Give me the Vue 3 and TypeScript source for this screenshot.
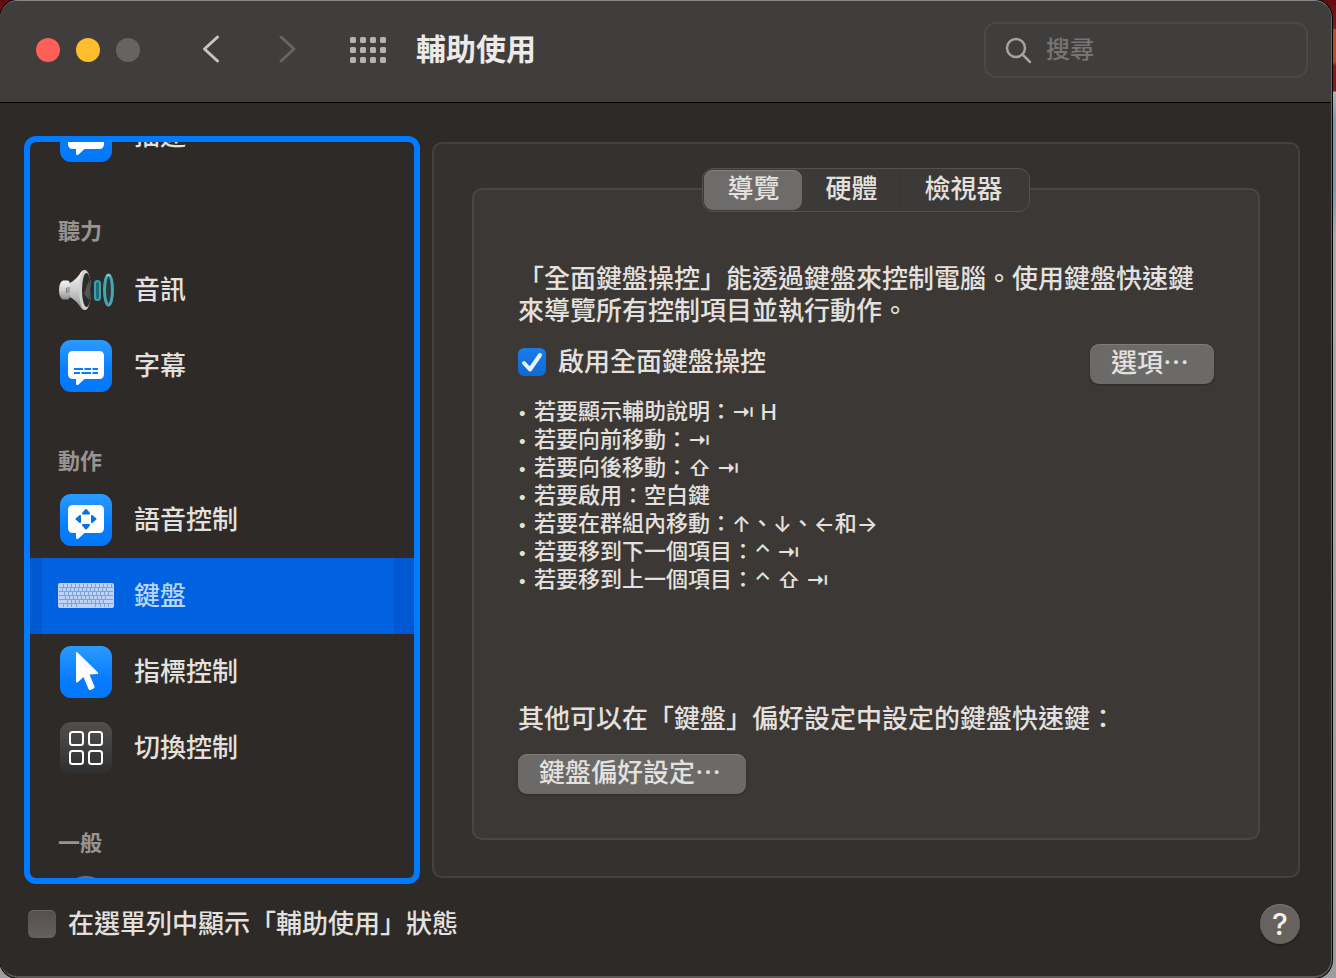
<script setup lang="ts">
import { onMounted, ref } from 'vue'

type IconName = 'bubble' | 'caption' | 'audio' | 'voice' | 'keyboard' | 'pointer' | 'switch' | 'round'

interface Item {
  icon: IconName
  label: string
}

interface Section {
  title: string
  items: Item[]
}

const sections: Section[] = [
  { title: '', items: [{ icon: 'bubble', label: '描述' }] },
  {
    title: '聽力',
    items: [
      { icon: 'audio', label: '音訊' },
      { icon: 'caption', label: '字幕' },
    ],
  },
  {
    title: '動作',
    items: [
      { icon: 'voice', label: '語音控制' },
      { icon: 'keyboard', label: '鍵盤' },
      { icon: 'pointer', label: '指標控制' },
      { icon: 'switch', label: '切換控制' },
    ],
  },
  { title: '一般', items: [{ icon: 'round', label: '' }] },
]

const blueTiles: IconName[] = ['bubble', 'caption', 'voice', 'pointer']
const bubbles: IconName[] = ['bubble', 'caption', 'voice']

const tabs: string[] = ['導覽', '硬體', '檢視器']

interface Part {
  text: string
  key?: boolean
}

const shortcuts: Part[][] = [
  [{ text: '若要顯示輔助說明：' }, { text: '⇥ H', key: true }],
  [{ text: '若要向前移動：' }, { text: '⇥', key: true }],
  [{ text: '若要向後移動：' }, { text: '⇧ ⇥', key: true }],
  [{ text: '若要啟用：空白鍵' }],
  [
    { text: '若要在群組內移動：' },
    { text: '↑', key: true },
    { text: '、' },
    { text: '↓', key: true },
    { text: '、' },
    { text: '←', key: true },
    { text: '和' },
    { text: '→', key: true },
  ],
  [{ text: '若要移到下一個項目：' }, { text: '⌃ ⇥', key: true }],
  [{ text: '若要移到上一個項目：' }, { text: '⌃ ⇧ ⇥', key: true }],
]

const selected = ref('鍵盤')
const activeTab = ref('導覽')
const fullKeyboard = ref(true)
const showStatus = ref(false)
const query = ref('')
const list = ref<HTMLElement | null>(null)

onMounted(() => {
  if (list.value) list.value.scrollTop = 44
})
</script>

<template>
  <div class="desktop" lang="zh-Hant">
    <div class="window">
      <header class="toolbar">
        <div class="lights">
          <button class="light close" type="button" aria-label="關閉"></button>
          <button class="light minimize" type="button" aria-label="縮到最小"></button>
          <button class="light zoom" type="button" aria-label="縮放" disabled></button>
        </div>
        <button class="nav back" type="button" aria-label="返回">
          <svg width="20" height="30" viewBox="0 0 20 30"><path d="M17.500 2 L4.500 14 L17.500 26" /></svg>
        </button>
        <button class="nav forward" type="button" aria-label="前進" disabled>
          <svg width="20" height="30" viewBox="0 0 20 30"><path d="M4 2 L17 14 L4 26" /></svg>
        </button>
        <button class="nav grid" type="button" aria-label="顯示全部">
          <svg width="36" height="26" viewBox="0 0 36 26">
            <template v-for="r in 3" :key="r">
              <rect
                v-for="c in 4"
                :key="c"
                :x="(c - 1) * 10"
                :y="(r - 1) * 10"
                width="6"
                height="6"
                rx="1.500"
              />
            </template>
          </svg>
        </button>
        <h1 class="title">輔助使用</h1>
        <label class="search">
          <svg width="28" height="28" viewBox="0 0 28 28">
            <circle cx="12" cy="12" r="9" />
            <path d="M18.500 18.500 L26 26" />
          </svg>
          <input v-model="query" type="text" placeholder="搜尋" aria-label="搜尋" />
        </label>
      </header>

      <main class="body">
        <nav ref="list" class="sidebar">
          <section v-for="(section, s) in sections" :key="s">
            <h2 v-if="section.title" class="heading">{{ section.title }}</h2>
            <button
              v-for="item in section.items"
              :key="item.icon"
              type="button"
              class="row"
              :class="{ selected: item.label === selected }"
              @click="selected = item.label"
            >
              <svg class="icon" width="56" height="56" viewBox="0 0 56 56">
                <defs>
                  <linearGradient :id="'blue' + s + item.icon" x1="0" y1="0" x2="0" y2="1">
                    <stop offset="0" stop-color="#2a9bff" />
                    <stop offset="0.600" stop-color="#0a7dff" />
                    <stop offset="1" stop-color="#0077fc" />
                  </linearGradient>
                  <linearGradient :id="'dark' + s + item.icon" x1="0" y1="0" x2="0" y2="1">
                    <stop offset="0" stop-color="#504f4e" />
                    <stop offset="1" stop-color="#2f2f2f" />
                  </linearGradient>
                  <linearGradient :id="'horn' + s + item.icon" x1="0" y1="0" x2="0" y2="1">
                    <stop offset="0" stop-color="#f4f4f4" />
                    <stop offset="0.500" stop-color="#cfcfcf" />
                    <stop offset="1" stop-color="#8c8c8c" />
                  </linearGradient>
                </defs>

                <rect
                  v-if="blueTiles.includes(item.icon)"
                  x="2" y="2" width="52" height="52" rx="11"
                  :fill="`url(#blue${s}${item.icon})`"
                />

                <path
                  v-if="bubbles.includes(item.icon)"
                  d="M15 13 H41 Q46 13 46 18 V36 Q46 41 41 41 H26.500 L20.500 46.500 Q18 48 18 45.500 V41 H15 Q10 41 10 36 V18 Q10 13 15 13 Z"
                  fill="#fff"
                />
                <path
                  v-if="item.icon === 'caption'"
                  d="M16 31 H25 M26.500 31 H33 M34.500 31 H40 M16 35 H22 M23.500 35 H33 M34.500 35 H40"
                  stroke="#0b7bf8" stroke-width="2" fill="none"
                />
                <path
                  v-if="item.icon === 'voice'"
                  d="M28 18 L31 21.500 H25 Z M28 36.500 L25 33 H31 Z M18.500 27 L22 24 V30 Z M37.500 27 L34 30 V24 Z"
                  fill="#0b6fe4" stroke="#0b6fe4" stroke-width="2" stroke-linejoin="round"
                />

                <path
                  v-if="item.icon === 'pointer'"
                  d="M19 8 L40 28.500 Q40.500 30 39 30 L31.500 30.500 L36.500 42.500 Q37 44 35.500 44.500 L32.500 46 Q31 46.500 30.500 45 L25.500 33 L20 38 Q18 39.500 18 37 V9 Q18 7.500 19 8 Z"
                  fill="#fff"
                />

                <template v-if="item.icon === 'switch'">
                  <rect x="2" y="2" width="52" height="52" rx="11" :fill="`url(#dark${s}${item.icon})`" />
                  <g fill="none" stroke="#fff" stroke-width="2">
                    <rect x="12" y="12" width="13" height="13" rx="2.500" />
                    <rect x="31" y="12" width="13" height="13" rx="2.500" />
                    <rect x="12" y="31" width="13" height="13" rx="2.500" />
                    <rect x="31" y="31" width="13" height="13" rx="2.500" />
                  </g>
                </template>

                <template v-if="item.icon === 'audio'">
                  <path d="M8 21 H14 V36 H8 Z" fill="#2b2a29" />
                  <path d="M5 18.500 H10 Q12 19 12 22 V26 H8.500 V31 H12 V34 Q12 37 10 37.500 H5 Q1 36 1 28 Q1 20 5 18.500 Z" :fill="`url(#horn${s}${item.icon})`" />
                  <path d="M9 25 H12 V31 H9 Z" fill="#a5a5a5" />
                  <path d="M12 21 Q19 17 23 10 Q25 7.500 27 8 V48 Q25 48.500 23 46 Q19 39 12 35 Z" :fill="`url(#horn${s}${item.icon})`" />
                  <ellipse cx="27" cy="28" rx="6" ry="20" fill="#d0d0d0" />
                  <ellipse cx="28.500" cy="28" rx="4.500" ry="17" fill="#2b2b2b" />
                  <path d="M26 32 L31 18 Q33 28 31 38 Z" fill="#555" />
                  <rect x="37" y="19" width="5" height="19" rx="2.500" fill="#1f6b78" stroke="#3e9fae" stroke-width="2" />
                  <ellipse cx="50.500" cy="28" rx="4" ry="15" fill="#263b3d" stroke="#4ba5b1" stroke-width="3" />
                  <path d="M48.500 14 Q50.500 11.500 52.500 14" stroke="#7fdcec" stroke-width="1.500" fill="none" />
                </template>

                <template v-if="item.icon === 'keyboard'">
                  <rect x="0" y="15" width="56" height="25" rx="2" fill="#bdd3f5" />
                  <g stroke="#7fa3d8" stroke-width="1" fill="none">
                    <path d="M1 19.500 H55 M1 23.500 H55 M1 27.500 H55 M1 31.500 H55 M1 35.500 H55" />
                    <path d="M5 17.500 H54" stroke-width="3" stroke-dasharray="1 3" />
                    <path d="M4 21.500 H50" stroke-width="3" stroke-dasharray="1 3" />
                    <path d="M6 25.500 H52" stroke-width="3" stroke-dasharray="1 3" />
                    <path d="M7 29.500 H48" stroke-width="3" stroke-dasharray="1 3" />
                    <path d="M9 33.500 H46" stroke-width="3" stroke-dasharray="1 3" />
                    <path d="M5.500 36 v3 M9.500 36 v3 M13.500 36 v3 M18.500 36 v3 M37.500 36 v3 M42.500 36 v3 M46.500 36 v3 M50.500 36 v3" />
                  </g>
                </template>

                <circle v-if="item.icon === 'round'" cx="28" cy="28" r="26" fill="#72706e" />
              </svg>
              <span class="label">{{ item.label }}</span>
            </button>
          </section>
        </nav>

        <section class="panel">
          <div class="tabs" role="tablist">
            <button
              v-for="tab in tabs"
              :key="tab"
              type="button"
              role="tab"
              class="tab"
              :class="{ active: tab === activeTab }"
              :aria-selected="tab === activeTab"
              @click="activeTab = tab"
            >
              {{ tab }}
            </button>
          </div>

          <div class="group">
            <p class="text">「全面鍵盤操控」能透過鍵盤來控制電腦。使用鍵盤快速鍵來導覽所有控制項目並執行動作。</p>
            <div class="enable">
              <label class="check">
                <input v-model="fullKeyboard" type="checkbox" />
                <svg class="tick" width="28" height="28" viewBox="0 0 28 28" aria-hidden="true">
                  <path v-if="fullKeyboard" d="M6 15 L12 21.500 L22 7" />
                </svg>
                <span>啟用全面鍵盤操控</span>
              </label>
              <button class="push" type="button">選項⋯</button>
            </div>
            <ul class="keys">
              <li v-for="(parts, i) in shortcuts" :key="i">
                <span class="bullet">•</span><span
                  v-for="(part, j) in parts"
                  :key="j"
                  :class="{ key: part.key }"
                >{{ part.text }}</span>
              </li>
            </ul>
            <p class="text more">其他可以在「鍵盤」偏好設定中設定的鍵盤快速鍵：</p>
            <button class="push" type="button">鍵盤偏好設定⋯</button>
          </div>
        </section>
      </main>

      <footer class="footer">
        <label class="check">
          <input v-model="showStatus" type="checkbox" />
          <svg class="tick" width="28" height="28" viewBox="0 0 28 28" aria-hidden="true">
            <path v-if="showStatus" d="M6 15 L12 21.500 L22 7" />
          </svg>
          <span>在選單列中顯示「輔助使用」狀態</span>
        </label>
        <button class="help" type="button">?</button>
      </footer>
    </div>
  </div>
</template>

<style>
body {
  margin: 0;
  background: #1b1a19;
}
</style>

<style scoped>
.desktop {
  box-sizing: border-box;
  height: 100vh;
  min-height: 700px;
  padding-right: 4px;
  background: linear-gradient(
    to bottom,
    #5e0d12 0,
    #8f1518 28px,
    #c14a20 30px,
    #c14a20 62px,
    #8f1518 66px,
    #8f1518 91px,
    #b4b4b6 92px,
    #7f9cab 120px,
    #7f9cab 190px,
    #a9adb0 240px,
    #9c9c9e 100%
  );
  color: #e3e1df;
  font-family: 'Liberation Sans', 'Noto Sans CJK TC', sans-serif;
  font-size: 26px;
  font-weight: 500;
  line-height: 32px;
}

button,
input {
  margin: 0;
  padding: 0;
  border: 0;
  background: none;
  color: inherit;
  font: inherit;
}

.window {
  box-sizing: border-box;
  display: flex;
  flex-direction: column;
  height: 100%;
  border: 1px solid #6a6765;
  border-top-color: #8a8886;
  border-left: 0;
  border-bottom: 2px solid #5b5754;
  border-radius: 18px;
  background: #2e2a27;
  box-shadow: 0 0 0 1px #000;
  overflow: hidden;
}

.toolbar {
  box-sizing: border-box;
  display: flex;
  align-items: center;
  height: 102px;
  flex: none;
  padding: 0 23px 4px 36px;
  border-bottom: 1px solid #000;
  background: #403e3c;
}

.lights {
  display: flex;
  gap: 16px;
  margin-right: 60px;
}

.light {
  width: 24px;
  height: 24px;
  border-radius: 50%;
}

.close {
  background: #ff5f57;
}

.minimize {
  background: #febc2e;
}

.zoom {
  background: #666462;
}

.nav {
  display: flex;
}

.nav path {
  fill: none;
  stroke: #c6c5c4;
  stroke-width: 3;
  stroke-linecap: round;
  stroke-linejoin: round;
}

.forward {
  margin-left: 57px;
}

.nav.forward path {
  stroke: #676563;
}

.grid {
  margin: 0 30px 0 53px;
}

.grid rect {
  fill: #b5b4b2;
}

.title {
  flex: 1;
  margin: 0;
  color: #eceae9;
  font-size: 30px;
  font-weight: 700;
  line-height: 40px;
}

.search {
  box-sizing: border-box;
  display: flex;
  align-items: center;
  gap: 14px;
  width: 324px;
  height: 56px;
  padding: 0 18px;
  border: 2px solid #4b4947;
  border-radius: 12px;
}

.search svg {
  flex: none;
  fill: none;
  stroke: #a5a3a2;
  stroke-width: 2.5;
  stroke-linecap: round;
}

.search input {
  flex: 1;
  min-width: 0;
  outline: none;
  font-size: 24px;
}

.search input::placeholder {
  color: #777573;
  opacity: 1;
}

.body {
  display: flex;
  flex: 1;
  min-height: 0;
  padding: 33px 31px 0 24px;
  gap: 12px;
}

.sidebar {
  box-sizing: border-box;
  width: 396px;
  flex: none;
  border: 6px solid #007aff;
  border-radius: 12px;
  overflow-y: auto;
  scrollbar-width: none;
}

.heading {
  box-sizing: border-box;
  height: 78px;
  margin: 0;
  padding: 38px 28px 0;
  color: #979492;
  font-size: 22px;
  font-weight: 700;
  line-height: 40px;
}

.row {
  display: flex;
  align-items: center;
  gap: 20px;
  width: 100%;
  height: 76px;
  padding: 0 28px;
  text-align: left;
}

.row.selected {
  background: linear-gradient(to right, #0058d0 12px, #0062e0 12px, #0062e0 calc(100% - 20px), #0058d0 calc(100% - 20px));
  color: #b9d5fb;
}

.icon {
  flex: none;
}

.panel {
  display: flex;
  flex: 1;
  flex-direction: column;
  min-width: 0;
  margin: 6px 0;
  padding: 24px 38px 36px;
  border: 2px solid #45413e;
  border-radius: 10px;
  background: #35312e;
}

.tabs {
  z-index: 1;
  display: flex;
  align-self: center;
  margin-bottom: -24px;
  padding: 1px;
  border: 1px solid #55524f;
  border-radius: 11px;
  background: #3c3a38;
}

.tab {
  height: 40px;
  padding: 0 23px 2px;
  border-radius: 9px;
}

.tab:last-child {
  padding: 0 25px 2px 24px;
  box-shadow: -1px 0 0 #363432;
  border-radius: 0;
}

.tab.active {
  background: #6e6c6a;
  box-shadow: inset 0 1px 0 #858381;
}

.group {
  flex: 1;
  padding: 73px 44px 0;
  border: 2px solid #4a4643;
  border-radius: 10px;
  background: #3c3835;
}

.text {
  margin: 0;
}

.enable {
  display: flex;
  align-items: flex-start;
  justify-content: space-between;
  margin: 17px 0 14px;
}

.check {
  position: relative;
  display: flex;
  align-items: center;
  gap: 12px;
}

.enable .check {
  padding-top: 2px;
}

.check input {
  position: absolute;
  width: 28px;
  height: 28px;
  opacity: 0;
}

.tick {
  border-radius: 6px;
  background: linear-gradient(#544f4c, #656160);
  box-shadow: inset 0 1px 0 #6b6765;
}

input:checked + .tick {
  background: linear-gradient(#1a7cea, #1068d4);
  box-shadow: none;
}

.tick path {
  fill: none;
  stroke: #eaf3ff;
  stroke-width: 4;
  stroke-linecap: round;
  stroke-linejoin: round;
}

.push {
  height: 40px;
  padding: 0 25px 2px 21px;
  border-radius: 9px;
  background: #6c6a68;
  box-shadow: inset 0 1px 0 #7d7b79, 0 1px 2px #2c2927;
}

.keys {
  margin: 0;
  padding: 0;
  list-style: none;
  font-size: 22px;
  line-height: 28px;
}

.keys li {
  display: flex;
}

.bullet {
  width: 16px;
  font-family: Inter, sans-serif;
  font-size: 16px;
}

.key {
  font-family: Inter, 'DejaVu Sans', sans-serif;
  white-space: pre;
}

.more {
  margin: 109px 0 19px;
}

.footer {
  display: flex;
  align-items: center;
  justify-content: space-between;
  flex: none;
  height: 80px;
  padding: 0 31px 12px 28px;
}

.help {
  width: 40px;
  height: 40px;
  border-radius: 50%;
  background: #656260;
  box-shadow: inset 0 1px 0 #7a7775, 0 1px 2px #1d1b19;
  color: #f2f1f0;
  font-family: Inter, sans-serif;
  font-size: 30px;
  font-weight: 500;
}
</style>
